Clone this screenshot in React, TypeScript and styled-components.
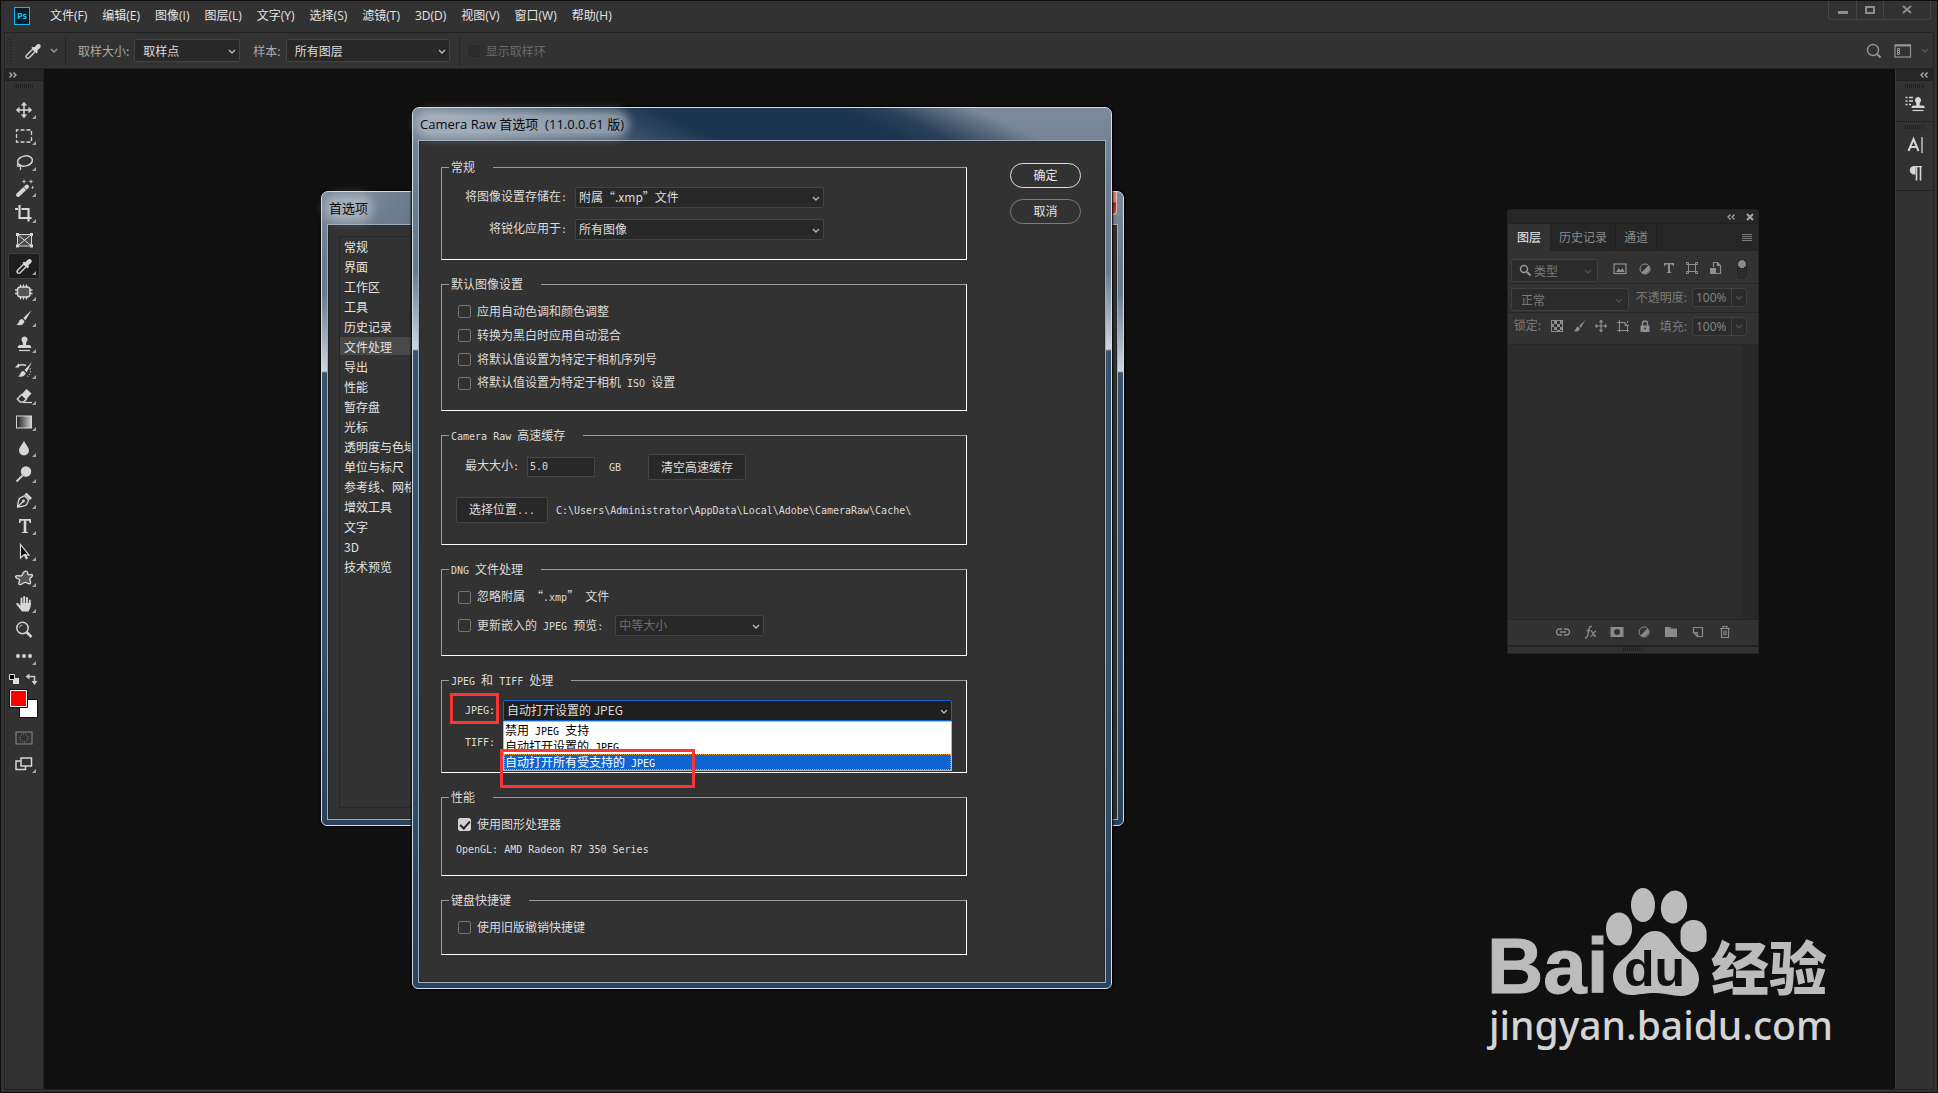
import React from 'react';
import styled, { createGlobalStyle, css } from 'styled-components';

const CJK = `"Noto Sans CJK SC", sans-serif`;
const UI = `"Open Sans", "Noto Sans CJK SC", sans-serif`;

const Global = createGlobalStyle`
  * { box-sizing: border-box; }
  body { margin: 0; background: #323232; color: #dcdcdc; font: 12px/16px ${CJK}; }
  button, input, select { font: inherit; color: inherit; margin: 0; }
  button { padding: 0; border: 0; background: none; }
  ul { list-style: none; margin: 0; padding: 0; }
`;

/* ---------- shared parts ---------- */

const Half = styled.span`
  font-family: "DejaVu Sans Mono", monospace;
  font-size: 10px;
  white-space: pre;
`;

/** Sets ASCII runs in the half-width face used inside the dialog. */
const Mixed = ({ text }: { text: string }) => (
  <>
    {text.split(/([\x20-\x7e]+)/).map((part, i) => (i % 2 ? <Half key={i}>{part}</Half> : part))}
  </>
);

const Svg = ({ size = 20, children }: { size?: number; children: React.ReactNode }) => (
  <svg width={size} height={size} viewBox={`0 0 ${size} ${size}`} fill="none" stroke="currentColor" aria-hidden="true">
    {children}
  </svg>
);

const Chevron = () => (
  <svg width="8" height="6" viewBox="0 0 8 6" fill="none" stroke="currentColor" aria-hidden="true">
    <path d="M1 1l3 3 3-3" strokeWidth="1.4" />
  </svg>
);

const SelectBox = styled.span<{ $w: number; $h?: number; $tone?: 'dim' | 'focus' }>`
  position: relative;
  display: inline-flex;
  width: ${(p) => p.$w}px;
  height: ${(p) => p.$h ?? 21}px;
  color: #dcdcdc;
  select {
    appearance: none;
    width: 100%;
    padding: 0 20px 2px 3px;
    border: 1px solid #444;
    border-radius: 2px;
    background: #282828;
    outline: none;
    opacity: 1;
  }
  svg { position: absolute; right: 4px; top: calc(50% - 2px); pointer-events: none; color: #b8b8b8; }
  ${(p) => p.$tone === 'dim' && css`select { color: #6e6e6e; }`}
  ${(p) => p.$tone === 'focus' && css`select { border-color: #1263cf; background: #1e1e1e; }`}
`;

const RoomySelect = styled(SelectBox)`
  select { padding: 0 20px 0 8px; }
`;

/* ---------- application frame ---------- */

const Shell = styled.div`
  display: flex;
  flex-direction: column;
  min-height: 100vh;
  border: 1px solid #0d0d0d;
  background: #323232;
`;
const MenuBar = styled.header`
  display: flex;
  align-items: center;
  height: 31px;
  padding: 0 6px 1px 13px;
  font: 12px/16px ${UI};
`;
const PsLogo = styled.span`
  width: 16px;
  height: 18px;
  margin: 0 12px 1px 0;
  border: 1px solid #10b9f0;
  background: #071d27;
  color: #20c3f7;
  font: 700 9px/15px "Open Sans", sans-serif;
  text-align: center;
`;
const Menus = styled.nav`
  display: flex;
  flex: 1;
  a { color: #e4e4e4; text-decoration: none; padding: 0 7px 0 8px; }
`;
const WindowButtons = styled.div`
  display: flex;
  align-self: flex-start;
  height: 19px;
  border: 1px solid #454545;
  border-top: 0;
  border-radius: 0 0 3px 3px;
  button { width: 27px; color: #8d8d8d; display: grid; place-items: center; }
  button + button { border-left: 1px solid #454545; }
  button:last-child { width: 47px; }
`;
const Inner = styled.div`
  flex: 1;
  display: flex;
  flex-direction: column;
  margin: 0 3px 2px;
  border: 1px solid #232323;
`;
const OptionBar = styled.div`
  display: flex;
  align-items: center;
  height: 36px;
  border-bottom: 1px solid #232323;
  color: #a9a9a9;
  padding: 0 4px 0 4px;
`;
const Rule = styled.span<{ $l: number; $r: number }>`
  width: 1px;
  height: 30px;
  margin: 0 ${(p) => p.$r}px 0 ${(p) => p.$l}px;
  background: #262626;
`;
const GripV = styled.span`
  width: 3px;
  height: 24px;
  background: repeating-linear-gradient(#242424 0 1px, transparent 1px 3px);
`;
const GripH = styled.span`
  width: 20px;
  height: 4px;
  background: repeating-linear-gradient(90deg, #222 0 1px, transparent 1px 2px);
`;
const Brand = styled.span`
  display: flex;
  align-items: center;
  gap: 7px;
  margin-left: 11px;
  color: #d4d4d4;
  svg + svg { color: #9a9a9a; }
`;
const OptionLabel = styled.label<{ $l?: number }>`
  margin: 0 5px 0 ${(p) => p.$l ?? 0}px;
`;
const RingLabel = styled.label`
  display: flex;
  align-items: center;
  gap: 6px;
  color: #6a6a6a;
`;
const RingBox = styled.input`
  appearance: none;
  width: 12px;
  height: 12px;
  border: 1px solid #2a2a2a;
  border-radius: 2px;
  background: #2b2b2b;
`;
const OptionEnd = styled.div`
  display: flex;
  align-items: center;
  gap: 10px;
  margin-left: auto;
  color: #959595;
  svg:last-child { color: #555; margin-left: -2px; }
`;

const Work = styled.div`
  flex: 1;
  display: flex;
`;
const Tools = styled.aside`
  width: 39px;
  border-right: 1px solid #232323;
`;
const ColumnHead = styled.div<{ $right?: boolean }>`
  display: flex;
  align-items: center;
  justify-content: ${(p) => (p.$right ? 'flex-end' : 'flex-start')};
  height: 12px;
  padding: 0 5px 0 4px;
  background: #262626;
  border-bottom: 1px solid #212121;
  color: #b4b4b4;
`;
const ToolList = styled.div`
  display: flex;
  flex-direction: column;
  align-items: center;
  padding-top: 3px;
`;
const ToolStack = styled.div`
  display: flex;
  flex-direction: column;
  padding-top: 9px;
`;
const Tool = styled.button<{ $on?: boolean; $more?: boolean }>`
  position: relative;
  display: grid;
  place-items: center;
  width: 32px;
  height: 26px;
  border: 1px solid ${(p) => (p.$on ? '#3e3e3e' : 'transparent')};
  border-radius: 3px;
  background: ${(p) => (p.$on ? '#1d1d1d' : 'none')};
  color: #d6d6d6;
  &::after {
    content: ${(p) => (p.$more === false ? 'none' : '""')};
    position: absolute;
    right: 3px;
    bottom: 3px;
    border: 2px solid transparent;
    border-right-color: #a8a8a8;
    border-bottom-color: #a8a8a8;
  }
`;
const Canvas = styled.main`
  position: relative;
  flex: 1;
  background: #101010;
  overflow: hidden;
`;
const Dock = styled.aside`
  width: 38px;
  border-left: 1px solid #3a3a3a;
`;
const DockGroup = styled.div`
  display: flex;
  flex-direction: column;
  align-items: center;
  gap: 4px;
  padding: 3px 0 5px;
  border-bottom: 1px solid #222;
  button { color: #d6d6d6; width: 28px; height: 24px; display: grid; place-items: center; }
`;

/* ---------- aero windows ---------- */

const Aero = styled.section<{ $x: number; $y: number; $w: number; $split: number }>`
  position: absolute;
  left: ${(p) => p.$x}px;
  top: ${(p) => p.$y}px;
  width: ${(p) => p.$w}px;
  padding: 0 5px 5px;
  border: 1px solid #d3dee7;
  border-radius: 7px 7px 6px 6px;
  box-shadow: 0 0 2px 1px #000;
  background: linear-gradient(
    #7c8a9a 0,
    #6c7b8d 70px,
    #69798d ${(p) => p.$split - 80}px,
    #cfd6dc ${(p) => p.$split - 2}px,
    #37536e ${(p) => p.$split}px,
    #34506b 70%,
    #29435c 100%
  );
`;
const TitleBar = styled.header<{ $wide?: boolean }>`
  display: flex;
  align-items: center;
  justify-content: space-between;
  height: 32px;
  margin: 0 -5px;
  padding: 0 6px 1px 7px;
  border-radius: 6px 6px 0 0;
  color: #0a0a0a;
  font: 13px/18px ${UI};
  background: ${(p) =>
    p.$wide
      ? 'linear-gradient(25deg, transparent 10%, #1c3550 40%, #1c3550 64%, #2a4059 70%, transparent 82%)'
      : 'linear-gradient(100deg, transparent 5%, #3d5166 30%, #3d5166 80%, transparent 98%)'};
`;
const TitleText = styled.h1`
  margin: 0;
  font: inherit;
  white-space: pre;
  border-radius: 10px;
  background: rgba(190, 200, 210, 0.6);
  box-shadow: 0 0 8px 5px rgba(190, 200, 210, 0.6);
`;
const CloseRed = styled.button`
  align-self: flex-start;
  width: 44px;
  height: 23px;
  border: 1px solid #e3b9b4;
  border-top: 0;
  border-radius: 0 0 4px 4px;
  background: linear-gradient(#c98378 45%, #9c2416 50%, #b9513c);
`;
const Pane = styled.div`
  border: 1px solid #9db0c1;
  background: #323232;
  box-shadow: inset 0 0 0 1px #26292c;
`;

const PrefPane = styled(Pane)`
  padding: 11px;
`;
const PrefList = styled.ul`
  width: 150px;
  min-height: 572px;
  border: 1px solid #272727;
  display: flex;
  flex-direction: column;
  gap: 2px;
`;
const PrefItem = styled.li<{ $on?: boolean }>`
  height: 18px;
  padding-left: 4px;
  line-height: 19px;
  white-space: nowrap;
  color: #e2e2e2;
  background: ${(p) => (p.$on ? '#484848' : 'none')};
`;

const RawPane = styled(Pane)`
  display: flex;
  justify-content: space-between;
  padding: 18px 24px 27px 22px;
`;
const Groups = styled.form`
  display: flex;
  flex-direction: column;
  gap: 16px;
  width: 526px;
`;
const Group = styled.fieldset<{ $top: number; $bottom: number; $gap?: number }>`
  position: relative;
  display: flex;
  flex-direction: column;
  gap: ${(p) => p.$gap ?? 0}px;
  min-width: 0;
  margin: 0;
  padding: ${(p) => p.$top}px 7px ${(p) => p.$bottom}px;
  border: 1px solid #fff;
  border-top-color: #9b9b9b;
  border-left-color: #9b9b9b;
`;
const Legend = styled.legend`
  height: 17px;
  padding: 0 18px 0 2px;
  line-height: 15px;
`;
const Line = styled.div<{ $h: number; $l?: number }>`
  display: flex;
  align-items: center;
  height: ${(p) => p.$h}px;
  padding-left: ${(p) => p.$l ?? 16}px;
  white-space: nowrap;
`;
const FieldLabel = styled.label<{ $w: number }>`
  width: ${(p) => p.$w}px;
  margin-right: 8px;
  padding-bottom: 2px;
  text-align: right;
`;
const CheckLabel = styled.label`
  display: flex;
  align-items: center;
  gap: 6px;
`;
const Check = styled.input`
  appearance: none;
  position: relative;
  width: 13px;
  height: 13px;
  border: 1px solid #737373;
  border-radius: 2px;
  &:checked { background: #d2d2d2; border-color: #d2d2d2; }
  &:checked::after {
    content: '';
    position: absolute;
    left: 3px;
    top: 0;
    width: 4px;
    height: 8px;
    border: solid #222;
    border-width: 0 2px 2px 0;
    transform: rotate(42deg);
  }
`;
const SizeInput = styled.input`
  width: 68px;
  height: 20px;
  margin-right: 14px;
  padding: 0 2px 2px;
  border: 1px solid #454545;
  background: #282828;
  font: 10px/14px "DejaVu Sans Mono", monospace;
`;
const FlatButton = styled.button<{ $w: number }>`
  width: ${(p) => p.$w}px;
  height: 26px;
  border: 1px solid #444;
  border-radius: 2px;
  background: #282828;
`;
const Unit = styled.span`
  width: 39px;
`;
const Path = styled.span`
  margin-left: 8px;
`;
const Actions = styled.div`
  display: flex;
  flex-direction: column;
  gap: 11px;
  padding-top: 4px;
`;
const Pill = styled.button<{ $main?: boolean }>`
  width: 71px;
  height: 25px;
  padding-bottom: 2px;
  border: ${(p) => (p.$main ? '1px solid #dedede' : '1px solid #7c7c7c')};
  border-radius: 13px;
  color: #e6e6e6;
`;
const PreviewSize = styled.span`
  display: flex;
  margin-left: 12px;
`;
const DropAnchor = styled.div`
  position: relative;
`;
const DropList = styled.ul`
  position: absolute;
  z-index: 2;
  left: 0;
  top: 21px;
  width: 449px;
  height: 50px;
  border: 1px solid #b5b5b5;
  background: #fff;
  color: #000;
`;
const DropItem = styled.li<{ $on?: boolean }>`
  height: 16px;
  border: ${(p) => (p.$on ? '1px dotted #e79a3a' : '1px solid transparent')};
  line-height: 14px;
  color: ${(p) => (p.$on ? '#fff' : '#000')};
  background: ${(p) => (p.$on ? '#1064d2' : 'none')};
`;
const RedMark = styled.span<{ $x: number; $y: number; $w: number; $h: number }>`
  position: absolute;
  z-index: 3;
  left: ${(p) => p.$x}px;
  top: ${(p) => p.$y}px;
  width: ${(p) => p.$w}px;
  height: ${(p) => p.$h}px;
  border: 3px solid #fb3434;
  pointer-events: none;
`;

/* ---------- layers panel ---------- */

const Layers = styled.section`
  position: absolute;
  right: 136px;
  top: 140px;
  width: 252px;
  border: 1px solid #222;
  border-radius: 3px 3px 0 0;
  background: #323232;
  color: #7a7a7a;
`;
const LayersHead = styled.div`
  display: flex;
  justify-content: flex-end;
  align-items: center;
  gap: 11px;
  height: 13px;
  padding-right: 4px;
  background: #262626;
  color: #a5a5a5;
`;
const Tabs = styled.div`
  display: flex;
  height: 28px;
  border-top: 1px solid #202020;
  background: #262626;
  button { padding: 0 8px 2px; border-right: 1px solid #202020; color: #8b8b8b; }
  button:first-child { padding: 0 9px 2px; background: #323232; color: #eee; }
  svg { margin: 8px 5px 0 auto; }
`;
const LayerRow = styled.div<{ $h: number; $pt: number }>`
  display: flex;
  height: ${(p) => p.$h}px;
  padding: ${(p) => p.$pt}px 11px 0 3px;
  border-bottom: 1px solid #272727;
  white-space: nowrap;
`;
const LayerSelect = styled(SelectBox)<{ $pad: number }>`
  select { background: #2b2b2b; border-color: #404040; border-radius: 3px; padding: 0 0 0 ${(p) => p.$pad}px; color: #7a7a7a; }
  svg { color: #4d4d4d; right: 6px; }
  svg.lead { left: 7px; top: 4px; color: #9a9a9a; }
`;
const FilterIcons = styled.div`
  display: flex;
  justify-content: space-between;
  flex: 1;
  margin: 2px 0 0 14px;
  color: #8f8f8f;
`;
const Toggle = styled.span`
  width: 10px;
  height: 20px;
  margin: -2px 0 0 6px;
  border: 1px solid #232323;
  border-radius: 5px;
  background: radial-gradient(circle at 4px 4px, #8a8a8a 4px, #2c2c2c 4px);
`;
const Percent = styled.span`
  display: flex;
  width: 55px;
  height: 19px;
  border: 1px solid #404040;
  border-radius: 3px;
  background: #2b2b2b;
  input { width: 38px; border: 0; background: none; padding: 0 3px; font: 12px/16px ${UI}; color: #868686; }
  button { flex: 1; border-left: 1px solid #404040; color: #4d4d4d; display: grid; place-items: center; }
`;
const PanelLabel = styled.label`
  margin: 1px 5px 0 auto;
`;
const LockIcons = styled.div`
  display: flex;
  gap: 8px;
  margin: 2px 0 0 9px;
  color: #8f8f8f;
`;
const LayerBody = styled.div`
  height: 274px;
  background: linear-gradient(90deg, #2c2c2c 234px, #292929 234px);
`;
const LayerFoot = styled.div`
  display: flex;
  justify-content: flex-end;
  align-items: center;
  gap: 11px;
  height: 26px;
  padding: 0 25px 2px 0;
  border-top: 1px solid #242424;
  color: #8a8a8a;
`;
const LayerGrip = styled.div`
  display: flex;
  justify-content: center;
  height: 8px;
  border-top: 2px solid #222;
`;

const Mark = styled.div`
  position: absolute;
  right: 58px;
  bottom: 27px;
  width: 352px;
`;

/* ---------- tool icons ---------- */

const f = { fill: 'currentColor', stroke: 'none' } as const;

const Dropper = () => (
  <Svg>
    <path d="M3.5 16.8c-.8-.8-.3-2 .4-2.800L9.800 8l2.600 2.600-6 6c-.8.8-2 1-2.900.2z" strokeWidth="1.400" />
    <path {...f} d="M8.300 6.700l1.600-1 1.600.6 2.200-2.500c1-1.200 2.800-1 3.500 0 .8.900.7 2.500-.4 3.400l-2.500 2 .6 1.500-1.200 1.700z" />
  </Svg>
);
const MoveIcon = () => (
  <Svg>
    <path d="M10 4v12M4 10h12" strokeWidth="1.500" />
    <path {...f} d="M10 1.800l3.200 3.700H6.800zM10 18.200l3.200-3.700H6.800zM1.800 10l3.700-3.200v6.400zM18.200 10l-3.700-3.200v6.400z" />
  </Svg>
);
const BrushIcon = () => (
  <Svg>
    <path {...f} d="M17.500 2.200L9.200 10l2.200 2.200zM8.300 11c-2 0-3 1.200-3.500 3-.3 1.200-1 2-2.500 2.500 3.500 1.500 7.500.6 8.200-3.200z" />
  </Svg>
);

const tools: { name: string; more?: boolean; icon: React.ReactNode }[] = [
  { name: '移动', icon: <MoveIcon /> },
  { name: '选框', icon: <Svg><rect x="2.500" y="4" width="15" height="12" strokeWidth="1.300" strokeDasharray="4 2" strokeDashoffset="2" /></Svg> },
  {
    name: '套索',
    icon: (
      <Svg>
        <ellipse cx="11" cy="9" rx="7.500" ry="5" transform="rotate(-12 11 9)" strokeWidth="1.500" />
        <path d="M4.500 12c-1.500.4-1.600 2.200-.2 2.300 1.600.1 2.500-1.500 1.200-2.300M5.500 14c1.500 1 1.500 2.500.5 4" strokeWidth="1.200" />
      </Svg>
    ),
  },
  {
    name: '魔棒',
    icon: (
      <Svg>
        <path d="M4 17L13 8.500" strokeWidth="4" strokeLinecap="round" />
        <path d="M9.500 9l3 3" stroke="#323232" strokeWidth=".8" />
        <path {...f} d="M10 1l.6 1.900 1.900.6-1.900.6L10 6l-.6-1.900-1.900-.6 1.900-.6zM17 1l.6 1.900 1.900.6-1.900.6L17 6l-.6-1.900-1.900-.6 1.900-.6zM18.500 7.500l.5 1.500 1 .5-1 .5-.5 1.500-.5-1.500-1-.5 1-.5z" />
      </Svg>
    ),
  },
  { name: '裁剪', icon: <Svg><path d="M5.500 1v13h9M1 5h3M7.500 5h7v9M14.500 14h3M14.500 14v3.500" strokeWidth="2.200" /></Svg> },
  {
    name: '图框',
    more: false,
    icon: (
      <Svg>
        <rect x="3.500" y="4.500" width="14" height="11.500" fill="#4a4a4a" />
        <path d="M3.500 4.500l14 11.500M17.500 4.500l-14 11.500" />
        <path {...f} d="M2 3h3v3H2zM16 3h3v3h-3zM2 14.500h3v3H2zM16 14.500h3v3h-3z" />
      </Svg>
    ),
  },
  { name: '吸管', icon: <Dropper /> },
  {
    name: '修补',
    icon: (
      <Svg>
        <rect x="3.500" y="5" width="12.500" height="10" rx="3" fill="#555" strokeWidth="1.500" />
        <path d="M6.500 2.500v3M9.500 2.500v3M12.500 2.500v3M6.500 14.500v3M9.500 14.500v3M12.500 14.500v3M1 8h3M1 11.500h3M15.500 8h3M15.500 11.500h3" strokeWidth="1.300" />
      </Svg>
    ),
  },
  { name: '画笔', icon: <BrushIcon /> },
  {
    name: '图章',
    icon: (
      <Svg>
        <path {...f} d="M10.500 2.500a3 3 0 0 1 2.300 5c-.6.800-.8 2-.6 3.500h3c1.200 0 2 .8 2 3H3.800c0-2.200.8-3 2-3h3c.2-1.500 0-2.700-.6-3.500a3 3 0 0 1 2.300-5z" />
        <path d="M5 16.500h11" strokeWidth="1.200" />
      </Svg>
    ),
  },
  {
    name: '历史画笔',
    icon: (
      <Svg>
        <path {...f} d="M18 2l-7.500 8 2.200 2.200zM9.500 11c-2 0-2.700 1.200-3.200 2.800-.3 1.200-1 1.900-2.300 2.400 3.500 1.300 7 .2 7.700-3.200zM1 7.500L5 3v4.500z" />
        <path d="M4 6c2.500-1.500 5-1.500 8-.5" strokeWidth="1.500" />
        <path d="M16 8.500c1.500 3 0 6-2.500 8" strokeDasharray="1 1.800" strokeWidth="1.300" />
      </Svg>
    ),
  },
  {
    name: '橡皮擦',
    icon: (
      <Svg>
        <path {...f} d="M12.500 3l5 4.500-5 5.500-5-4.500z" />
        <path d="M7.500 8.500l5 4.500-2.800 3H6.200L3.300 13z" strokeWidth="1.400" />
        <path d="M9 16.500h9" strokeWidth="1.200" />
      </Svg>
    ),
  },
  {
    name: '渐变',
    icon: (
      <Svg>
        <defs>
          <linearGradient id="ramp"><stop stopColor="#1c1c1c" /><stop offset="1" stopColor="#d0d0d0" /></linearGradient>
        </defs>
        <rect x="2.500" y="4" width="15" height="12" fill="url(#ramp)" />
      </Svg>
    ),
  },
  { name: '模糊', icon: <Svg><path {...f} d="M10 2.500c1 3.500 5 6.500 5 10a5 5 0 0 1-10 0c0-3.500 4-6.500 5-10z" /></Svg> },
  { name: '减淡', icon: <Svg><circle cx="12" cy="7.500" r="5.200" {...f} /><path d="M8.500 11.500l-6 6" strokeWidth="1.800" /></Svg> },
  {
    name: '钢笔',
    icon: (
      <Svg>
        <path d="M3.500 17c.2-3.500.8-7 2.500-9l4.500-2.200 4.200 4.200-2 4.500c-2 1.700-5.600 2.300-9.200 2.500zM3.500 17l5.500-5.500" strokeWidth="1.300" />
        <circle cx="9.500" cy="11" r="1.400" {...f} />
        <path {...f} d="M10.500 4.500l2-1.800 5.500 5.200-2 2.200z" />
      </Svg>
    ),
  },
  { name: '文字', icon: <Svg><path {...f} d="M5 3h12v4h-1.300c-.3-1.700-.7-2.300-2.200-2.300H12.300v10.500c0 .8.600 1 1.900 1.100V17H7.800v-.7c1.300-.1 1.900-.3 1.900-1.100V4.700H8.500C7 4.700 6.600 5.300 6.300 7H5z" /></Svg> },
  {
    name: '路径选择',
    icon: (
      <Svg>
        <path d="M6.500 2.500v13.500l3-2.800h5.500z" fill="#000" strokeWidth="1.200" />
        <path d="M10.500 12l2.500 5" strokeWidth="2.200" />
      </Svg>
    ),
  },
  {
    name: '形状',
    icon: <Svg><path d="M8.500 6.500C9 4 11.500 2.500 13 3.500s0 3 1.500 3.200c1.500.1 3.500-.8 4 .6.400 1.500-2.500 2-2.800 3.700-.2 1.500 1.800 3 .6 4.400-1.300 1.300-3.500-1.200-5.300-1S7 17.500 5.200 16.500c-1.700-1.100.8-2.700.5-4.300S1 10.500 1.700 8.500c.7-1.800 3-.5 4.300-.5s2.200-.2 2.500-1.500z" fill="#555" strokeWidth="1.400" /></Svg>,
  },
  {
    name: '抓手',
    icon: (
      <Svg>
        <path d="M7.500 10V4.500M10.200 9V3M13 9.500V4M15.800 10.500V6.500" strokeWidth="1.900" strokeLinecap="round" />
        <path {...f} d="M6.500 9h10.300c.2 4.500-1 6-2.300 8.500H8C6.500 15.500 3.500 12 2.300 10.300c-.4-1.300 1.200-1.800 2.200-.8l2 2.200z" />
      </Svg>
    ),
  },
  { name: '缩放', more: false, icon: <Svg><circle cx="8.500" cy="8" r="5.700" strokeWidth="1.500" /><path d="M5.500 7.500c.3-1.500 1.500-2.300 3-2.300" /><path d="M12.500 12l5 5" strokeWidth="2.500" /></Svg> },
  { name: '更多', icon: <Svg><circle cx="4" cy="10" r="2" {...f} /><circle cx="10" cy="10" r="2" {...f} /><circle cx="16" cy="10" r="2" {...f} /></Svg> },
];

const Swatches = styled.svg`
  display: block;
  margin-top: 2px;
`;

/* ---------- content ---------- */

const menus = ['文件(F)', '编辑(E)', '图像(I)', '图层(L)', '文字(Y)', '选择(S)', '滤镜(T)', '3D(D)', '视图(V)', '窗口(W)', '帮助(H)'];
const prefs = ['常规', '界面', '工作区', '工具', '历史记录', '文件处理', '导出', '性能', '暂存盘', '光标', '透明度与色域', '单位与标尺', '参考线、网格和切片', '增效工具', '文字', '3D', '技术预览'];
const defaults = ['应用自动色调和颜色调整', '转换为黑白时应用自动混合', '将默认值设置为特定于相机序列号', '将默认值设置为特定于相机 ISO 设置'];

const Pick = ({ id, w, value, tone }: { id: string; w: number; value: string; tone?: 'dim' | 'focus' }) => (
  <SelectBox $w={w} $tone={tone}>
    <select id={id} defaultValue={value} disabled={tone === 'dim'}><option>{value}</option></select>
    <Chevron />
  </SelectBox>
);

const Tick = ({ text, on }: { text: string; on?: boolean }) => (
  <CheckLabel>
    <Check type="checkbox" defaultChecked={on} />
    <span><Mixed text={text} /></span>
  </CheckLabel>
);

const Arrows = ({ left }: { left?: boolean }) => (
  <svg width="8" height="6" viewBox="0 0 8 6" fill="none" stroke="currentColor" strokeWidth="1.300" aria-hidden="true">
    <path d={left ? 'M3.500.500L1 3l2.500 2.500M7.500.500L5 3l2.500 2.500' : 'M.500.500L3 3 .500 5.500M4.500.500L7 3 4.500 5.500'} />
  </svg>
);

const PreferencesWindow = () => (
  <Aero $x={277} $y={122} $w={803} $split={181}>
    <TitleBar>
      <TitleText>首选项</TitleText>
      <CloseRed aria-label="关闭" />
    </TitleBar>
    <PrefPane>
      <PrefList>
        {prefs.map((p) => <PrefItem key={p} $on={p === '文件处理'}>{p}</PrefItem>)}
      </PrefList>
    </PrefPane>
  </Aero>
);

const CameraRawWindow = () => (
  <Aero $x={368} $y={38} $w={700} $split={243}>
    <TitleBar $wide>
      <TitleText>{'Camera Raw 首选项  (11.0.0.61 版)'}</TitleText>
    </TitleBar>
    <RawPane>
      <Groups>
        <Group $top={11} $bottom={19} $gap={11}>
          <Legend>常规</Legend>
          <Line $h={21}>
            <FieldLabel $w={102} htmlFor="store"><Mixed text="将图像设置存储在:" /></FieldLabel>
            <Pick id="store" w={249} value="附属“.xmp”文件" />
          </Line>
          <Line $h={21}>
            <FieldLabel $w={102} htmlFor="sharpen"><Mixed text="将锐化应用于:" /></FieldLabel>
            <Pick id="sharpen" w={249} value="所有图像" />
          </Line>
        </Group>

        <Group $top={6} $bottom={15}>
          <Legend>默认图像设置</Legend>
          {defaults.map((d) => <Line key={d} $h={24} $l={9}><Tick text={d} /></Line>)}
        </Group>

        <Group $top={10} $bottom={21} $gap={17}>
          <Legend><Mixed text="Camera Raw 高速缓存" /></Legend>
          <Line $h={26}>
            <FieldLabel $w={54} htmlFor="size"><Mixed text="最大大小:" /></FieldLabel>
            <SizeInput id="size" defaultValue="5.0" />
            <Unit><Mixed text="GB" /></Unit>
            <FlatButton type="button" $w={98}>清空高速缓存</FlatButton>
          </Line>
          <Line $h={26} $l={7}>
            <FlatButton type="button" $w={92}><Mixed text="选择位置..." /></FlatButton>
            <Path><Mixed text={'C:\\Users\\Administrator\\AppData\\Local\\Adobe\\CameraRaw\\Cache\\'} /></Path>
          </Line>
        </Group>

        <Group $top={7} $bottom={19} $gap={6}>
          <Legend><Mixed text="DNG 文件处理" /></Legend>
          <Line $h={24} $l={9}><Tick text="忽略附属 “.xmp” 文件" /></Line>
          <Line $h={21} $l={9}>
            <Tick text="更新嵌入的 JPEG 预览:" />
            <PreviewSize>
              <SelectBox $w={149} $tone="dim">
                <select aria-label="预览大小" disabled><option>中等大小</option></select>
                <Chevron />
              </SelectBox>
            </PreviewSize>
          </Line>
        </Group>

        <Group $top={11} $bottom={19} $gap={11}>
          <Legend><Mixed text="JPEG 和 TIFF 处理" /></Legend>
          <Line $h={21}>
            <FieldLabel $w={30} htmlFor="jpeg"><Mixed text="JPEG:" /></FieldLabel>
            <DropAnchor>
              <Pick id="jpeg" w={449} value="自动打开设置的 JPEG" tone="focus" />
              <DropList role="listbox">
                <DropItem role="option"><Mixed text="禁用 JPEG 支持" /></DropItem>
                <DropItem role="option"><Mixed text="自动打开设置的 JPEG" /></DropItem>
                <DropItem role="option" $on><Mixed text="自动打开所有受支持的 JPEG" /></DropItem>
              </DropList>
            </DropAnchor>
          </Line>
          <Line $h={21}>
            <FieldLabel $w={30} as="span"><Mixed text="TIFF:" /></FieldLabel>
          </Line>
          <RedMark $x={8} $y={4} $w={49} $h={31} />
          <RedMark $x={58} $y={60} $w={195} $h={39} />
        </Group>

        <Group $top={6} $bottom={17} $gap={6}>
          <Legend>性能</Legend>
          <Line $h={24} $l={9}><Tick text="使用图形处理器" on /></Line>
          <Line $h={16} $l={7}><Mixed text="OpenGL: AMD Radeon R7 350 Series" /></Line>
        </Group>

        <Group $top={6} $bottom={15}>
          <Legend>键盘快捷键</Legend>
          <Line $h={24} $l={9}><Tick text="使用旧版撤销快捷键" /></Line>
        </Group>
      </Groups>
      <Actions>
        <Pill $main>确定</Pill>
        <Pill>取消</Pill>
      </Actions>
    </RawPane>
  </Aero>
);

const HalfDisc = ({ size = 14 }: { size?: number }) => {
  const c = size / 2;
  return (
    <Svg size={size}>
      <circle cx={c} cy={c} r="5" />
      <path {...f} d={`M${c + 3.5} ${c - 3.5}a5 5 0 0 1-7 7z`} />
    </Svg>
  );
};

const LayersPanel = () => (
  <Layers>
    <LayersHead>
      <Arrows left />
      <Svg size={8}><path d="M1 1l6 6M7 1L1 7" strokeWidth="2" /></Svg>
    </LayersHead>
    <Tabs>
      <button>图层</button>
      <button>历史记录</button>
      <button>通道</button>
      <Svg size={12}><path d="M1 2.500h10M1 4.500h10M1 6.500h10M1 8.500h10" strokeWidth="1" /></Svg>
    </Tabs>
    <LayerRow $h={33} $pt={8}>
      <LayerSelect $w={87} $h={23} $pad={22}>
        <svg className="lead" width="14" height="14" viewBox="0 0 14 14" fill="none" stroke="currentColor" aria-hidden="true">
          <circle cx="6" cy="6" r="3.500" strokeWidth="1.500" /><path d="M9 9l3.500 3.500" strokeWidth="2" />
        </svg>
        <select aria-label="类型"><option>类型</option></select>
        <Chevron />
      </LayerSelect>
      <FilterIcons>
        <Svg size={16}><rect x="2" y="3" width="12" height="9.500" strokeWidth="1.200" /><path {...f} d="M4 11l2.500-4 2 2.500L10.500 7 12.500 11z" /></Svg>
        <HalfDisc size={16} />
        <Svg size={14}><path {...f} d="M2 2h10v3h-1c-.2-1-.5-1.500-1.500-1.500H8v7.500l1.500.5v.5h-5v-.5L6 11V3.500H4.500C3.500 3.500 3.200 4 3 5H2z" /></Svg>
        <Svg size={14}><path d="M3.500 3.500h7v7h-7z" /><path d="M1.500 1.500h2v2h-2zM10.500 1.500h2v2h-2zM1.500 10.500h2v2h-2zM10.500 10.500h2v2h-2z" /></Svg>
        <Svg size={14}><path d="M5.500 6V1.500h4l3 3v8h-5M9.500 1.500v3h3" strokeWidth="1.200" /><path {...f} d="M2 7h6v6H2z" /></Svg>
        <Toggle />
      </FilterIcons>
    </LayerRow>
    <LayerRow $h={29} $pt={4}>
      <LayerSelect $w={118} $h={23} $pad={9}>
        <select aria-label="混合模式"><option>正常</option></select>
        <Chevron />
      </LayerSelect>
      <PanelLabel htmlFor="opacity">不透明度:</PanelLabel>
      <Percent><input id="opacity" defaultValue="100%" /><button aria-label="不透明度选项"><Chevron /></button></Percent>
    </LayerRow>
    <LayerRow $h={32} $pt={4}>
      <span>&nbsp;锁定:</span>
      <LockIcons>
        <Svg size={14}><rect x="1.500" y="1.500" width="11" height="11" /><path {...f} d="M4 2h3v3H4zM10 2h3v3h-3zM2 5h2v3H2zM7 5h3v3H7zM4 8h3v3H4zM10 8h3v3h-3zM7 11h3v2H7z" /></Svg>
        <Svg size={14}><path {...f} d="M13.500 1L7 7l1.800 1.800zM6.300 7.800c-1.500 0-2.200.8-2.600 2.200-.3 1-.9 1.600-2 2 2.800 1 5.600.3 6.200-2.500z" /></Svg>
        <Svg size={14}><path d="M7 2v10M2 7h10" strokeWidth="1.200" /><path {...f} d="M7 .500l2.300 2.700H4.700zM7 13.500l2.300-2.700H4.700zM.500 7l2.700-2.300v4.600zM13.500 7l-2.700-2.300v4.600z" /></Svg>
        <Svg size={14}><path d="M3.500 1v12M1 3.500h8l2.500 3V13M1 11.500h12M9 3.500v3h4M11.500 2v2" /></Svg>
        <Svg size={14}><path {...f} d="M2.500 6.500h9V13h-9z" /><path d="M4.500 7V4.500a2.500 2.500 0 0 1 5 0V7" strokeWidth="1.400" /><circle cx="7" cy="9.500" r="1" fill="#323232" stroke="none" /></Svg>
      </LockIcons>
      <PanelLabel htmlFor="fill">填充:</PanelLabel>
      <Percent><input id="fill" defaultValue="100%" /><button aria-label="填充选项"><Chevron /></button></Percent>
    </LayerRow>
    <LayerBody />
    <LayerFoot>
      <Svg size={16}><path d="M7 5H4.500a3 3 0 0 0 0 6H7M9 5h2.500a3 3 0 0 1 0 6H9M5 8h6" strokeWidth="1.300" /></Svg>
      <Svg size={16}><path d="M3 14c2 0 2.500-1.500 3-4l1-5c.4-2 1-3 2.800-2.500M4.500 6.500h4M9 7c2 0 2 5.500 5 5.500M14 7c-2 0-3 5.500-5.500 5.500" strokeWidth="1.300" /></Svg>
      <Svg size={16}><path fillRule="evenodd" {...f} d="M1.500 3h13v10h-13zM8 5a3 3 0 1 0 0 6 3 3 0 0 0 0-6z" /></Svg>
      <HalfDisc size={16} />
      <Svg size={16}><path {...f} d="M2 3h5.500v1.500H14V13H2z" /></Svg>
      <Svg size={16}><path d="M3.500 8V3.500h9v9H8zM3.500 8.500h4v4z" strokeWidth="1.200" /></Svg>
      <Svg size={16}><path d="M3 4.500h10M6 4V2.500h4V4M4.500 5v8.500h7V5M7 6.500v5M9 6.500v5" strokeWidth="1.200" /></Svg>
    </LayerFoot>
    <LayerGrip><GripH /></LayerGrip>
  </Layers>
);

const Watermark = () => (
  <Mark>
    <svg width="352" height="172" viewBox="0 0 352 172" fill="#bcbcbc" aria-label="Baidu 经验">
      <text x="2" y="106" fontFamily="Liberation Sans, sans-serif" fontWeight="700" fontSize="78" stroke="#bcbcbc" strokeWidth="1">Bai</text>
      <ellipse cx="134" cy="42" rx="13" ry="16.500" />
      <ellipse cx="158" cy="18" rx="12" ry="17" />
      <ellipse cx="189" cy="20" rx="13" ry="16.500" transform="rotate(10 189 20)" />
      <rect x="195.500" y="33" width="26" height="32" rx="12.500" />
      <path d="M170 44c9 0 13 6 18 13 6 9 12 12 18 18 6 6 8 12 8 17 0 10-7 17-18 17-9 0-16-3-26-3s-17 2-24 2c-12 0-18-9-18-18 0-7 3-12 10-18 6-5 10-9 15-16 4-6 8-12 17-12z" />
      <text x="139" y="99" fill="#111" fontFamily="Liberation Sans, sans-serif" fontWeight="700" fontSize="50">du</text>
      <text x="226" y="103" fontFamily="Noto Sans CJK SC, sans-serif" fontWeight="900" fontSize="58">经验</text>
      <text x="4" y="153" fill="#d4d4d4" fontFamily="Noto Sans, sans-serif" fontWeight="500" fontSize="39">jingyan.baidu.com</text>
    </svg>
  </Mark>
);

export default function App() {
  return (
    <>
      <Global />
      <Shell>
        <MenuBar>
          <PsLogo>Ps</PsLogo>
          <Menus>{menus.map((m) => <a key={m} href="#menu">{m}</a>)}</Menus>
          <WindowButtons>
            <button aria-label="最小化"><Svg size={12}><path d="M1 8.500h10" strokeWidth="3" /></Svg></button>
            <button aria-label="最大化"><Svg size={12}><rect x="2" y="3" width="8" height="6" strokeWidth="2" /></Svg></button>
            <button aria-label="关闭"><Svg size={12}><path d="M2 2l8 7M10 2L2 9" strokeWidth="2" /></Svg></button>
          </WindowButtons>
        </MenuBar>
        <Inner>
          <OptionBar>
            <GripV />
            <Brand><Dropper /><Chevron /></Brand>
            <Rule $l={7} $r={12} />
            <OptionLabel htmlFor="sample">取样大小:</OptionLabel>
            <RoomySelect $w={106} $h={23}>
              <select id="sample"><option>取样点</option></select>
              <Chevron />
            </RoomySelect>
            <OptionLabel $l={13} htmlFor="layers">样本:</OptionLabel>
            <RoomySelect $w={164} $h={23}>
              <select id="layers"><option>所有图层</option></select>
              <Chevron />
            </RoomySelect>
            <Rule $l={9} $r={8} />
            <RingLabel><RingBox type="checkbox" disabled />显示取样环</RingLabel>
            <OptionEnd>
              <Svg><circle cx="10" cy="9" r="5.500" strokeWidth="1.400" /><path d="M14 13l3.500 3.500" strokeWidth="2" /></Svg>
              <Svg><rect x="2" y="4" width="15.500" height="12" strokeWidth="1.200" /><path d="M2 4.500h15.500" strokeWidth="2" /><path d="M4.500 7.500h2v6h-2zM4.500 9.500h2M4.500 11.500h2" /></Svg>
              <Chevron />
            </OptionEnd>
          </OptionBar>
          <Work>
            <Tools>
              <ColumnHead><Arrows /></ColumnHead>
              <ToolList>
                <GripH />
                <ToolStack>
                  {tools.map((t) => (
                    <Tool key={t.name} aria-label={t.name} $on={t.name === '吸管'} $more={t.more}>{t.icon}</Tool>
                  ))}
                </ToolStack>
                <Swatches width="32" height="54" viewBox="-1 0 32 54">
                  <path d="M4 7h6v6H4z" fill="#ddd" />
                  <path d="M.500 3.500h5v5h-5z" fill="#000" stroke="#ddd" />
                  <path d="M19 5.500h6.500V12" fill="none" stroke="#ccc" strokeWidth="1.500" />
                  <path d="M20.500 2.500v6l-4-3zM22.500 10h6l-3 4z" fill="#ccc" />
                  <path d="M10.500 28.500h18v18h-18z" fill="#fff" stroke="#111" />
                  <path d="M.500 18.500h18v18H.500z" fill="#f00" stroke="#111" />
                  <path d="M1.500 19.500h16v16h-16z" fill="none" stroke="#fff" />
                </Swatches>
                <Tool aria-label="快速蒙版" $more={false}>
                  <Svg><rect x="2" y="4" width="16" height="12" stroke="#8c8c8c" /><circle cx="10" cy="10" r="4" stroke="#a0a0a0" strokeDasharray="1 1.500" /></Svg>
                </Tool>
                <Tool aria-label="屏幕模式">
                  <Svg><rect x="2" y="7" width="9.500" height="8.500" strokeWidth="1.500" /><rect x="7" y="4" width="10.500" height="8" fill="#323232" strokeWidth="1.500" /></Svg>
                </Tool>
              </ToolList>
            </Tools>
            <Canvas>
              <PreferencesWindow />
              <CameraRawWindow />
              <LayersPanel />
              <Watermark />
            </Canvas>
            <Dock>
              <ColumnHead $right><Arrows left /></ColumnHead>
              <DockGroup>
                <GripH />
                <button aria-label="仿制源">
                  <Svg><path d="M.500 3.500h2M4 3.500h4M.500 7h2M4 7h4M.500 10.500h2M4 10.500h2" strokeWidth="1.500" /><path {...f} d="M13 3a3.200 3.200 0 0 1 2.300 5.300c-.6.700-.7 1.700-.5 3.200h3c1.200 0 2 .8 2 2.500H6.500c0-1.700.8-2.500 2-2.500h2.700c.2-1.500.1-2.500-.5-3.200A3.200 3.200 0 0 1 13 3z" /><path d="M7.500 16.500h11" strokeWidth="1.200" /></Svg>
                </button>
              </DockGroup>
              <DockGroup>
                <GripH />
                <button aria-label="字符"><Svg><path d="M3.500 16L8.500 4l5 12M5.500 12h6" strokeWidth="2" /><path d="M17 2v16" strokeWidth="1.300" /></Svg></button>
                <button aria-label="段落"><Svg><path {...f} d="M9 3h8v1.200H9z M10.500 3v8.500H9A4.200 4.200 0 0 1 9 3z" /><path d="M11.500 3v14.500M15.500 3v14.500" strokeWidth="1.600" /></Svg></button>
              </DockGroup>
            </Dock>
          </Work>
        </Inner>
      </Shell>
    </>
  );
}
